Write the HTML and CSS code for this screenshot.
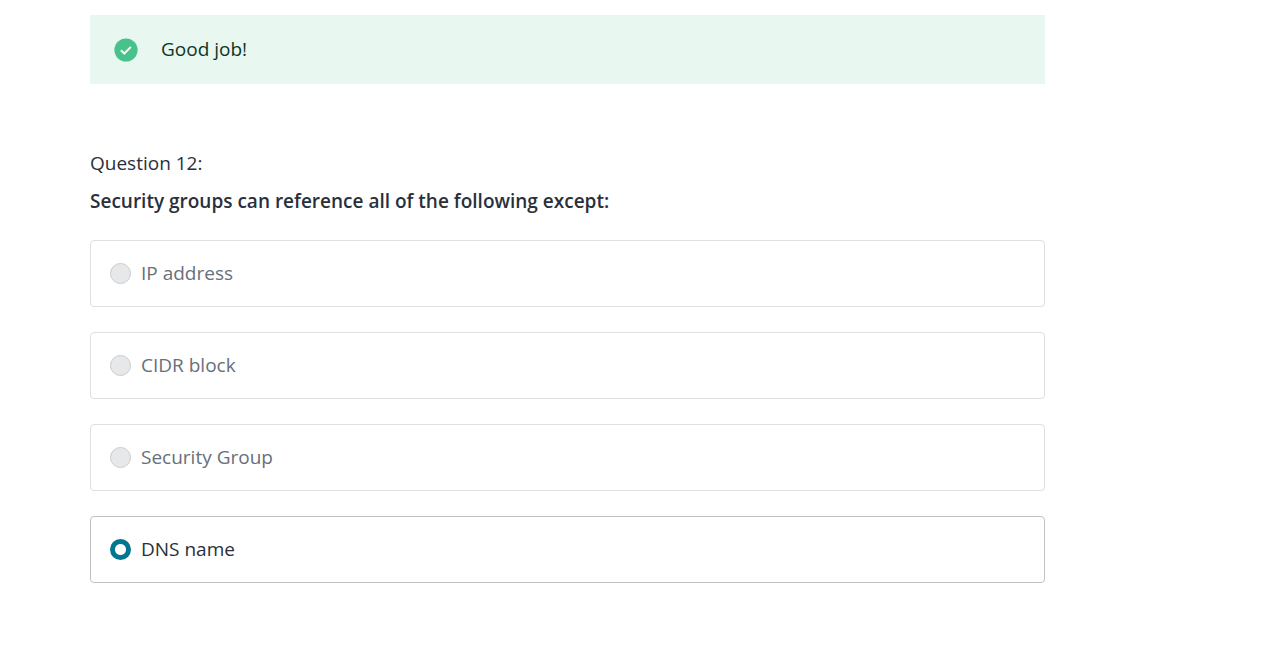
FILE: index.html
```html
<!DOCTYPE html>
<html lang="en">
<head>
<meta charset="utf-8">
<meta name="viewport" content="width=device-width, initial-scale=1">
<title>Question 12</title>
<link rel="stylesheet" href="styles.css">
</head>
<body>
<main class="quiz">
  <div class="alert" role="status">
    <svg class="alert-icon" viewBox="0 0 24 24" aria-hidden="true">
      <circle cx="12" cy="12" r="11.6" fill="#48c28c"/>
      <path d="M6.9 12.3l3.4 3.2 6.6-6.6" fill="none" stroke="#f0faf5" stroke-width="2"/>
    </svg>
    <p class="alert-text">Good job!</p>
  </div>
  <form class="question">
    <p class="question-number">Question 12:</p>
    <h1 class="question-title" id="question-title">Security groups can reference all of the following except:</h1>
    <div class="answers" role="radiogroup" aria-labelledby="question-title">
      <label class="answer"><input class="radio" type="radio" name="answer" disabled>IP address</label>
      <label class="answer"><input class="radio" type="radio" name="answer" disabled>CIDR block</label>
      <label class="answer"><input class="radio" type="radio" name="answer" disabled>Security Group</label>
      <label class="answer answer-selected"><input class="radio" type="radio" name="answer" checked>DNS name</label>
    </div>
  </form>
</main>
</body>
</html>
```
FILE: styles.css
```css
* {
  box-sizing: border-box;
}

body {
  margin: 0;
  background: #fff;
  color: #29303b;
  font-family: "Open Sans", sans-serif;
  font-size: 19px;
  font-weight: 400;
  line-height: 29px;
}

.quiz {
  width: 74.5%;
  margin-left: 90px;
  padding-top: 15px;
}

.alert {
  display: flex;
  align-items: center;
  gap: 23px;
  padding: 20px 24px;
  background: #e8f7f0;
  color: #0c3624;
}

.alert-icon {
  width: 24px;
  height: 24px;
}

.alert-text,
.question-number,
.question-title {
  margin: 0;
}

.question {
  padding-top: 65px;
}

.question-title {
  margin-top: 9px;
  font-size: 19px;
  font-weight: 600;
}

.answers {
  display: grid;
  gap: 25px;
  margin-top: 24px;
}

.answer {
  display: flex;
  align-items: center;
  gap: 10px;
  padding: 18px 19px;
  border: 1px solid #dedfe1;
  border-radius: 4px;
  color: #686f7a;
}

.answer-selected {
  border-color: #bfc1c5;
  color: #29303b;
}

.radio {
  appearance: none;
  width: 21px;
  height: 21px;
  margin: 0;
  border: 1px solid #c9cbcd;
  border-radius: 50%;
  background: #e7e8ea;
}

.radio:checked {
  border: 0;
  background: radial-gradient(circle, #fff 5px, #007791 6px);
}
```
